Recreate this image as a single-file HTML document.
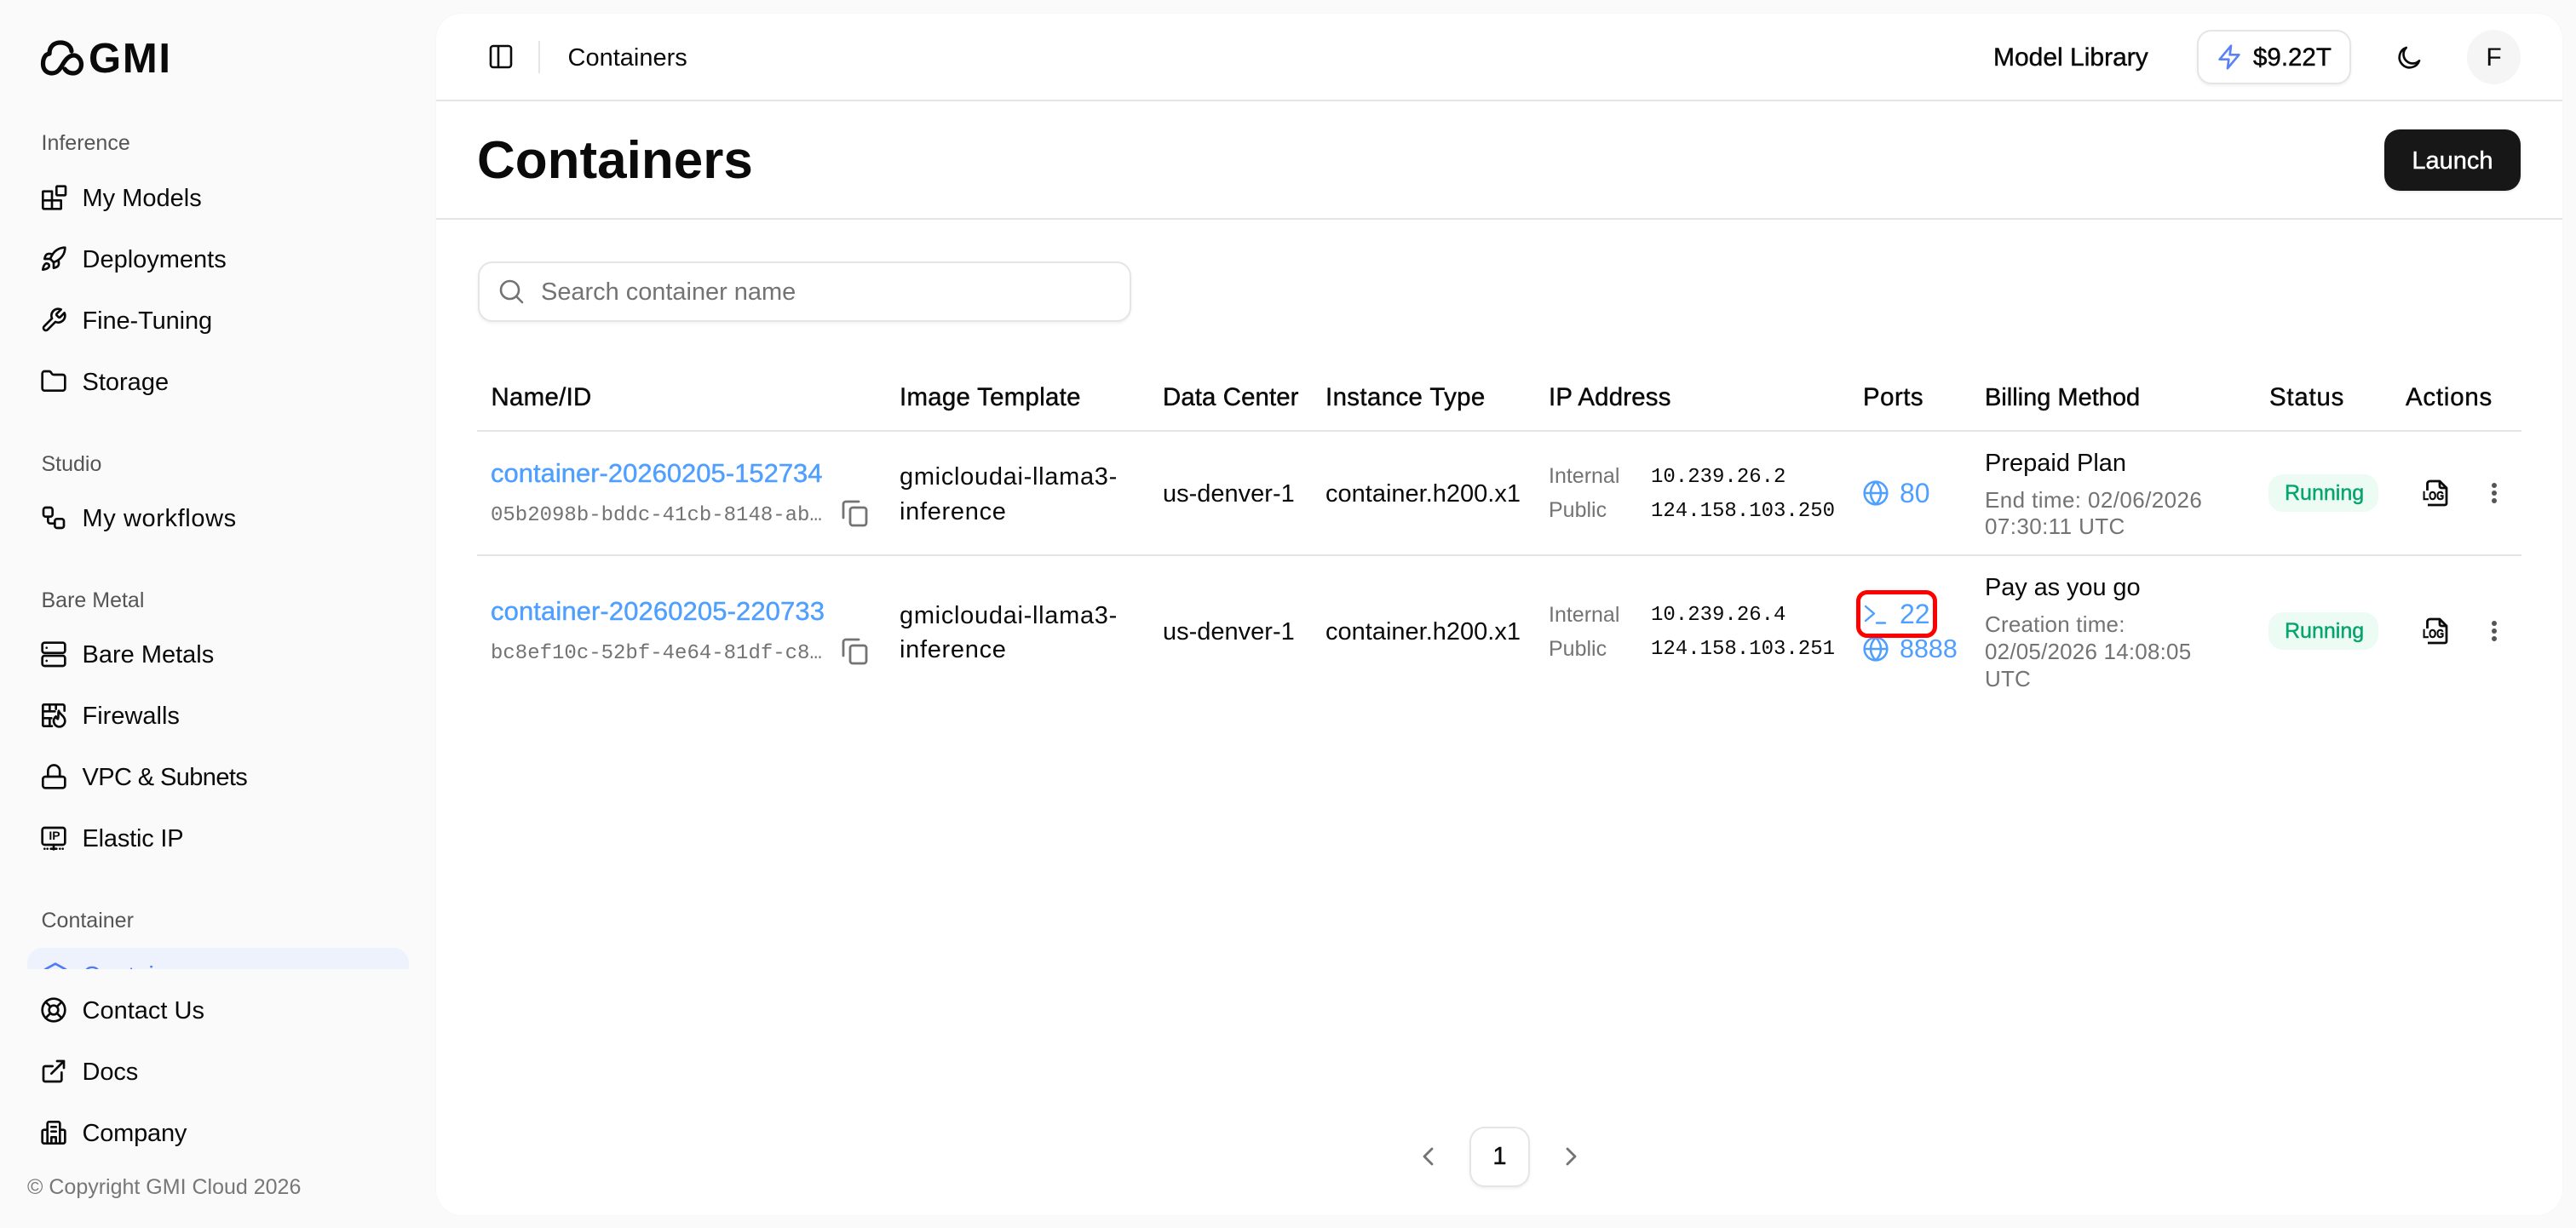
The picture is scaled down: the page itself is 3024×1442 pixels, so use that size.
<!DOCTYPE html>
<html lang="en">
<head>
<meta charset="utf-8">
<title>Containers</title>
<style>
html,body{margin:0;padding:0;width:3024px;height:1442px;overflow:hidden;background:#fafafa}
body{position:relative;font-family:"Liberation Sans",sans-serif;color:#0a0a0a;font-size:29px}
.t{position:absolute;white-space:nowrap;line-height:40px;height:40px;margin-top:1px}
.m{-webkit-text-stroke:.45px currentColor}
.g{color:#737373}
.b{color:#4f9fff}
.mono{font-family:"Liberation Mono",monospace;font-size:24px;margin-top:3px}
.i{position:absolute;left:47px;width:32px;height:32px;fill:none;stroke:#0a0a0a;stroke-width:2;stroke-linecap:round;stroke-linejoin:round}
.l{position:absolute;background:#e5e5e5}
.ab{position:absolute}
.pill{position:absolute;left:2663px;width:129px;height:44px;border-radius:17px;background:#ecfbf4}
.dot{position:absolute;left:2925px;width:6px;height:6px;border-radius:50%;background:#555}
.log{position:absolute;left:2844px;width:30px;height:16px;line-height:16px;font-size:14.5px;font-weight:700;white-space:nowrap;-webkit-text-stroke:.5px #0a0a0a;transform:scaleX(.8);transform-origin:0 50%}
.h{font-size:29.400px}
.n{left:96.500px}
</style>
</head>
<body>
<!-- sidebar -->
<svg class="ab" style="left:44px;top:44px" width="60" height="48" viewBox="44 44 60 48" fill="none" stroke="#0a0a0a" stroke-width="5.2" stroke-linecap="round" stroke-linejoin="round"><path d="M84 60C83 53 77 50 71 50C63 50 58 55 58 63C52 64 50.500 70 50.500 75C50.500 82 55 86 61 86C68 86 71 80 74 75C77 70 81 65 86.500 65C92 65 95.500 71 95.500 75.500C95.500 82 91 86 86 86C81 86 78 84 76 81"/></svg>
<div class="t" style="left:104px;top:44px;font-size:49px;font-weight:700;letter-spacing:1.700px;line-height:48px;height:48px">GMI</div>

<div class="t" style="left:48.500px;top:147px;font-size:25px;color:#555">Inference</div>
<svg class="i" style="top:216px" viewBox="0 0 24 24"><path d="M3 6.500H10.500V14.500H18.500V21.500a.5.5 0 0 1-.5.5H3.500a1 1 0 0 1-1-1V7a.5.5 0 0 1 .5-.5zM2.500 14.500H10.500V22"/><rect x="14.500" y="2" width="8" height="8" rx=".8"/></svg>
<div class="t n" style="top:212px">My Models</div>
<svg class="i" style="top:288px" viewBox="0 0 24 24"><path d="M4.500 16.500c-1.500 1.260-2 5-2 5s3.740-.5 5-2c.71-.84.7-2.130-.09-2.910a2.180 2.180 0 0 0-2.910-.09z"/><path d="m12 15-3-3a22 22 0 0 1 2-3.950A12.880 12.880 0 0 1 22 2c0 2.720-.78 7.500-6 11a22.350 22.350 0 0 1-4 2z"/><path d="M9 12H4s.55-3.030 2-4c1.620-1.080 5 0 5 0"/><path d="M12 15v5s3.030-.55 4-2c1.080-1.620 0-5 0-5"/></svg>
<div class="t n" style="top:284px">Deployments</div>
<svg class="i" style="top:360px" viewBox="0 0 24 24"><path d="M14.700 6.300a1 1 0 0 0 0 1.400l1.600 1.600a1 1 0 0 0 1.400 0l3.770-3.770a6 6 0 0 1-7.940 7.940l-6.910 6.910a2.120 2.120 0 0 1-3-3l6.910-6.910a6 6 0 0 1 7.940-7.940l-3.760 3.760z"/></svg>
<div class="t n" style="top:356px;letter-spacing:-.1px">Fine-Tuning</div>
<svg class="i" style="top:432px" viewBox="0 0 24 24"><path d="M4 20h16a2 2 0 0 0 2-2V8a2 2 0 0 0-2-2h-7.930a2 2 0 0 1-1.660-.9l-.82-1.200A2 2 0 0 0 7.930 3H4a2 2 0 0 0-2 2v13c0 1.100.9 2 2 2z"/></svg>
<div class="t n" style="top:428px">Storage</div>

<div class="t" style="left:48.500px;top:524px;font-size:25px;color:#555">Studio</div>
<svg class="i" style="top:592px" viewBox="0 0 24 24"><rect x="3" y="3" width="8" height="8" rx="2"/><path d="M7 11v4a2 2 0 0 0 2 2h4"/><rect x="13" y="13" width="8" height="8" rx="2"/></svg>
<div class="t n" style="top:588px;letter-spacing:.6px">My workflows</div>

<div class="t" style="left:48.500px;top:684px;font-size:25px;color:#555">Bare Metal</div>
<svg class="i" style="top:752px" viewBox="0 0 24 24"><rect x="2" y="2" width="20" height="9" rx="2"/><rect x="2" y="13.500" width="20" height="9" rx="2"/><path d="M5.800 6.500h.01M5.800 18h.01"/></svg>
<div class="t n" style="top:748px">Bare Metals</div>
<svg class="i" style="top:824px" viewBox="0 0 24 24"><path d="M10.500 21.500H3.500a1 1 0 0 1-1-1V3.500a1 1 0 0 1 1-1H20a1.500 1.500 0 0 1 1.500 1.500V8M2.500 8.500H13M2.500 14.500H10M8.500 2.500v6M8.500 14.500v7M14 2.500v4"/><path d="M16.500 8c.5 3 5.500 4.500 5.500 9a5 5 0 0 1-10 0c0-1.800.8-3 2-4 .2 1.300.8 2 1.700 2.200C16.600 13 15.600 10 16.500 8z"/></svg>
<div class="t n" style="top:820px">Firewalls</div>
<svg class="i" style="top:896px" viewBox="0 0 24 24"><rect x="2.500" y="12" width="19.500" height="10" rx="2.200"/><path d="M7 12V7a5.200 5.200 0 0 1 10.400 0v5"/></svg>
<div class="t n" style="top:892px;letter-spacing:-.6px">VPC &amp; Subnets</div>
<svg class="i" style="top:968px" viewBox="0 0 24 24"><rect x="2" y="3" width="20" height="15" rx="2"/><path d="M12 18v4M9.500 21.500h5M4 21.500h.01M20 21.500h.01M6.500 21.500h.01M17.500 21.500h.01"/></svg>
<div class="ab" style="left:56px;top:972px;width:16px;height:18px;line-height:18px;font-size:14px;font-weight:700;text-align:center;white-space:nowrap">IP</div>
<div class="t n" style="top:964px;letter-spacing:-.2px">Elastic IP</div>

<div class="t" style="left:48.500px;top:1060px;font-size:25px;color:#555">Container</div>
<div class="ab" style="left:32px;top:1113px;width:448px;height:25px;overflow:hidden;border-radius:18px 18px 0 0;background:#eef2fd">
  <svg class="i" style="left:17px;top:16px;stroke:#4f7cf5" viewBox="0 0 24 24"><path d="M12 2 3 7v10l9 5 9-5V7z"/></svg>
  <div class="t" style="left:65px;top:12px;color:#4f7cf5">Containers</div>
</div>

<svg class="i" style="top:1170px" viewBox="0 0 24 24"><circle cx="12" cy="12" r="10"/><circle cx="12" cy="12" r="4"/><path d="m4.930 4.930 4.240 4.240M14.830 9.170l4.240-4.240M14.830 14.830l4.240 4.240M9.170 14.830l-4.240 4.240"/></svg>
<div class="t n" style="top:1166px">Contact Us</div>
<svg class="i" style="top:1242px" viewBox="0 0 24 24"><path d="M19 13v6.500a1.500 1.500 0 0 1-1.500 1.500H4.500A1.500 1.500 0 0 1 3 19.500V9a1.500 1.500 0 0 1 1.500-1.500H11"/><path d="M15 3h6v6M10 14 21 3"/></svg>
<div class="t n" style="top:1238px;letter-spacing:-.1px">Docs</div>
<svg class="i" style="top:1314px" viewBox="0 0 24 24"><path d="M6.500 21.500V4a1.500 1.500 0 0 1 1.500-1.500h8A1.500 1.500 0 0 1 17.500 4v17.500M6.500 9.500H3.500a1.500 1.500 0 0 0-1.500 1.500v9a1.500 1.500 0 0 0 1.500 1.500h17a1.500 1.500 0 0 0 1.500-1.500v-9a1.500 1.500 0 0 0-1.500-1.500h-3M10 7h4M10 11h4M10 21.500V16h4v5.500"/></svg>
<div class="t n" style="top:1310px;letter-spacing:-.2px">Company</div>
<div class="t" style="left:32px;top:1373px;font-size:25px;color:#777">© Copyright GMI Cloud 2026</div>

<!-- main panel -->
<div class="ab" style="left:512px;top:16px;width:2496px;height:1411px;background:#fff;border-radius:30px;box-shadow:0 0 2px rgba(0,0,0,.04)"></div>
<div class="l" style="left:512px;top:117px;width:2496px;height:2px"></div>
<div class="l" style="left:512px;top:256px;width:2496px;height:2px"></div>

<!-- header -->
<svg class="ab" style="left:572px;top:50px" width="32" height="32" viewBox="0 0 32 32" fill="none" stroke="#0a0a0a" stroke-width="2.600"><rect x="4" y="4" width="24" height="25" rx="3"/><path d="M13 4v25"/></svg>
<div class="l" style="left:632px;top:48px;width:2px;height:38px"></div>
<div class="t" style="left:666.500px;top:47px">Containers</div>
<div class="t m" style="left:2340px;top:47px;font-size:30px">Model Library</div>
<div class="ab" style="left:2579px;top:35px;width:181px;height:64px;box-sizing:border-box;border:2px solid #e5e5e5;border-radius:17px;background:#fff;box-shadow:0 2px 3px rgba(0,0,0,.06)"></div>
<svg class="ab" style="left:2601px;top:51px" width="32" height="32" viewBox="0 0 24 24" fill="none" stroke="#5b82f5" stroke-width="2" stroke-linejoin="round" stroke-linecap="round"><path d="M13.500 2 3.500 14h8l-1 8 10-12h-8z"/></svg>
<div class="t m" style="left:2645px;top:47px;font-size:29.500px">$9.22T</div>
<svg class="ab" style="left:2812px;top:52px" width="32" height="32" viewBox="0 0 24 24" fill="none" stroke="#0a0a0a" stroke-width="2" stroke-linejoin="round" stroke-linecap="round"><path d="M9.500 3a9 9 0 1 0 11.500 11.500A7.500 7.500 0 0 1 9.500 3z"/></svg>
<div class="ab" style="left:2896px;top:35px;width:63px;height:64px;border-radius:50%;background:#f5f5f5"></div>
<div class="t" style="left:2896px;top:47px;width:63px;text-align:center;font-size:30px">F</div>

<!-- title -->
<div class="t" style="left:560px;top:158px;font-size:62px;font-weight:700;line-height:60px;height:60px">Containers</div>
<div class="ab" style="left:2799px;top:152px;width:160px;height:72px;border-radius:18px;background:#171717;box-shadow:0 1px 3px rgba(0,0,0,.12)"></div>
<div class="t m" style="left:2799px;top:168px;width:160px;text-align:center;color:#fff">Launch</div>

<!-- search -->
<div class="ab" style="left:561px;top:307px;width:767px;height:71px;box-sizing:border-box;border:2px solid #e5e5e5;border-radius:17px;background:#fff;box-shadow:0 2px 3px rgba(0,0,0,.06)"></div>
<svg class="ab" style="left:585px;top:327px" width="30" height="30" viewBox="0 0 30 30" fill="none" stroke="#737373" stroke-width="2.600" stroke-linecap="round"><circle cx="13.500" cy="13.500" r="10.500"/><path d="m21.500 21.500 6.500 6.500"/></svg>
<div class="t g" style="left:635px;top:322px;letter-spacing:-.03px">Search container name</div>

<!-- table header -->
<div class="t m h" style="left:576.500px;top:446px;letter-spacing:.3px">Name/ID</div>
<div class="t m h" style="left:1056px;top:446px;letter-spacing:.3px">Image Template</div>
<div class="t m h" style="left:1365px;top:446px;letter-spacing:.1px">Data Center</div>
<div class="t m h" style="left:1556px;top:446px;letter-spacing:.4px">Instance Type</div>
<div class="t m h" style="left:1818px;top:446px;letter-spacing:.2px">IP Address</div>
<div class="t m h" style="left:2187px;top:446px;letter-spacing:.5px">Ports</div>
<div class="t m" style="left:2330px;top:446px">Billing Method</div>
<div class="t m h" style="left:2664px;top:446px;letter-spacing:.8px">Status</div>
<div class="t m h" style="left:2824px;top:446px;letter-spacing:.8px">Actions</div>
<div class="l" style="left:560px;top:505px;width:2400px;height:2px"></div>
<div class="l" style="left:560px;top:651px;width:2400px;height:2px"></div>

<!-- row 1 -->
<div class="t m b" style="left:576px;top:535px;font-size:31px">container-20260205-152734</div>
<div class="t g mono" style="left:576px;top:583px">05b2098b-bddc-41cb-8148-ab…</div>
<svg class="ab" style="left:986px;top:586px" width="34" height="34" viewBox="0 0 34 34" fill="none" stroke="#737373" stroke-width="2.800" stroke-linecap="round" stroke-linejoin="round"><rect x="12" y="10" width="19" height="21" rx="3"/><path d="M4 22V6a3 3 0 0 1 3-3h15"/></svg>
<div class="t" style="left:1056px;top:539px;letter-spacing:.7px">gmicloudai-llama3-</div>
<div class="t" style="left:1056px;top:580px;letter-spacing:.7px">inference</div>
<div class="t" style="left:1365px;top:559px">us-denver-1</div>
<div class="t" style="left:1556px;top:559px">container.h200.x1</div>
<div class="t g" style="left:1818px;top:538px;font-size:25px">Internal</div>
<div class="t g" style="left:1818px;top:578px;font-size:25px">Public</div>
<div class="t mono" style="left:1938px;top:538px">10.239.26.2</div>
<div class="t mono" style="left:1938px;top:578px">124.158.103.250</div>
<svg class="ab" style="left:2186px;top:563px" width="32" height="32" viewBox="0 0 24 24" fill="none" stroke="#4f9fff" stroke-width="1.900"><circle cx="12" cy="12" r="10"/><path d="M2 12h20M12 2c-6 6-6 14 0 20M12 2c6 6 6 14 0 20"/></svg>
<div class="t b" style="left:2230px;top:558px;font-size:32px">80</div>
<div class="t" style="left:2330px;top:523px">Prepaid Plan</div>
<div class="t g" style="left:2330px;top:566px;font-size:26px;letter-spacing:.4px">End time: 02/06/2026</div>
<div class="t g" style="left:2330px;top:597px;font-size:26px;letter-spacing:.4px">07:30:11 UTC</div>
<div class="pill" style="top:557px"></div>
<div class="t m" style="left:2682px;top:558px;font-size:25px;color:#05a56b">Running</div>
<svg class="ab" style="left:2843px;top:562px" width="32" height="33" viewBox="0 0 32 33" fill="none" stroke="#0a0a0a" stroke-width="2.800" stroke-linejoin="round"><path d="M6.500 14V6a3 3 0 0 1 3-3h11.500l8 8v18a2 2 0 0 1-2 2H7"/><path d="M21 3v6a2 2 0 0 0 2 2h6"/></svg>
<div class="log" style="top:575px">LOG</div>
<div class="dot" style="top:567px"></div><div class="dot" style="top:576px"></div><div class="dot" style="top:585px"></div>

<!-- row 2 -->
<div class="t m b" style="left:576px;top:697px;font-size:31px;letter-spacing:.1px">container-20260205-220733</div>
<div class="t g mono" style="left:576px;top:745px">bc8ef10c-52bf-4e64-81df-c8…</div>
<svg class="ab" style="left:986px;top:748px" width="34" height="34" viewBox="0 0 34 34" fill="none" stroke="#737373" stroke-width="2.800" stroke-linecap="round" stroke-linejoin="round"><rect x="12" y="10" width="19" height="21" rx="3"/><path d="M4 22V6a3 3 0 0 1 3-3h15"/></svg>
<div class="t" style="left:1056px;top:702px;letter-spacing:.7px">gmicloudai-llama3-</div>
<div class="t" style="left:1056px;top:742px;letter-spacing:.7px">inference</div>
<div class="t" style="left:1365px;top:721px">us-denver-1</div>
<div class="t" style="left:1556px;top:721px">container.h200.x1</div>
<div class="t g" style="left:1818px;top:701px;font-size:25px">Internal</div>
<div class="t g" style="left:1818px;top:741px;font-size:25px">Public</div>
<div class="t mono" style="left:1938px;top:700px">10.239.26.4</div>
<div class="t mono" style="left:1938px;top:740px">124.158.103.251</div>
<svg class="ab" style="left:2186px;top:746px" width="32" height="32" viewBox="0 0 24 24" fill="none" stroke="#4f9fff" stroke-width="1.900"><circle cx="12" cy="12" r="10"/><path d="M2 12h20M12 2c-6 6-6 14 0 20M12 2c6 6 6 14 0 20"/></svg>
<div class="t b" style="left:2230px;top:741px;font-size:30.500px">8888</div>
<svg class="ab" style="left:2188px;top:708px" width="28" height="28" viewBox="0 0 28 28" fill="none" stroke="#4f9fff" stroke-width="2.400" stroke-linecap="round" stroke-linejoin="round"><path d="m2 4 10 8.500L2 21M15 23.500h10"/></svg>
<div class="t b" style="left:2230px;top:700px;font-size:32px">22</div>
<div class="ab" style="left:2179px;top:693px;width:95px;height:56px;box-sizing:border-box;border:5.500px solid #f00;border-radius:13px"></div>
<div class="t" style="left:2330px;top:669px;letter-spacing:-.1px">Pay as you go</div>
<div class="t g" style="left:2330px;top:712px;font-size:26px;letter-spacing:.2px">Creation time:</div>
<div class="t g" style="left:2330px;top:744px;font-size:26px;letter-spacing:.2px">02/05/2026 14:08:05</div>
<div class="t g" style="left:2330px;top:776px;font-size:26px;letter-spacing:.2px">UTC</div>
<div class="pill" style="top:719px"></div>
<div class="t m" style="left:2682px;top:720px;font-size:25px;color:#05a56b">Running</div>
<svg class="ab" style="left:2843px;top:724px" width="32" height="33" viewBox="0 0 32 33" fill="none" stroke="#0a0a0a" stroke-width="2.800" stroke-linejoin="round"><path d="M6.500 14V6a3 3 0 0 1 3-3h11.500l8 8v18a2 2 0 0 1-2 2H7"/><path d="M21 3v6a2 2 0 0 0 2 2h6"/></svg>
<div class="log" style="top:737px">LOG</div>
<div class="dot" style="top:729px"></div><div class="dot" style="top:738px"></div><div class="dot" style="top:747px"></div>

<!-- pagination -->
<svg class="ab" style="left:1668px;top:1346px" width="18" height="24" viewBox="0 0 18 24" fill="none" stroke="#737373" stroke-width="2.800" stroke-linecap="round" stroke-linejoin="round"><path d="M13 3 4 12l9 9"/></svg>
<div class="ab" style="left:1725px;top:1323px;width:71px;height:71px;box-sizing:border-box;border:2px solid #e5e5e5;border-radius:18px;background:#fff;box-shadow:0 2px 3px rgba(0,0,0,.06)"></div>
<div class="t m" style="left:1725px;top:1337px;width:71px;text-align:center">1</div>
<svg class="ab" style="left:1835px;top:1346px" width="18" height="24" viewBox="0 0 18 24" fill="none" stroke="#737373" stroke-width="2.800" stroke-linecap="round" stroke-linejoin="round"><path d="m5 3 9 9-9 9"/></svg>
</body>
</html>
